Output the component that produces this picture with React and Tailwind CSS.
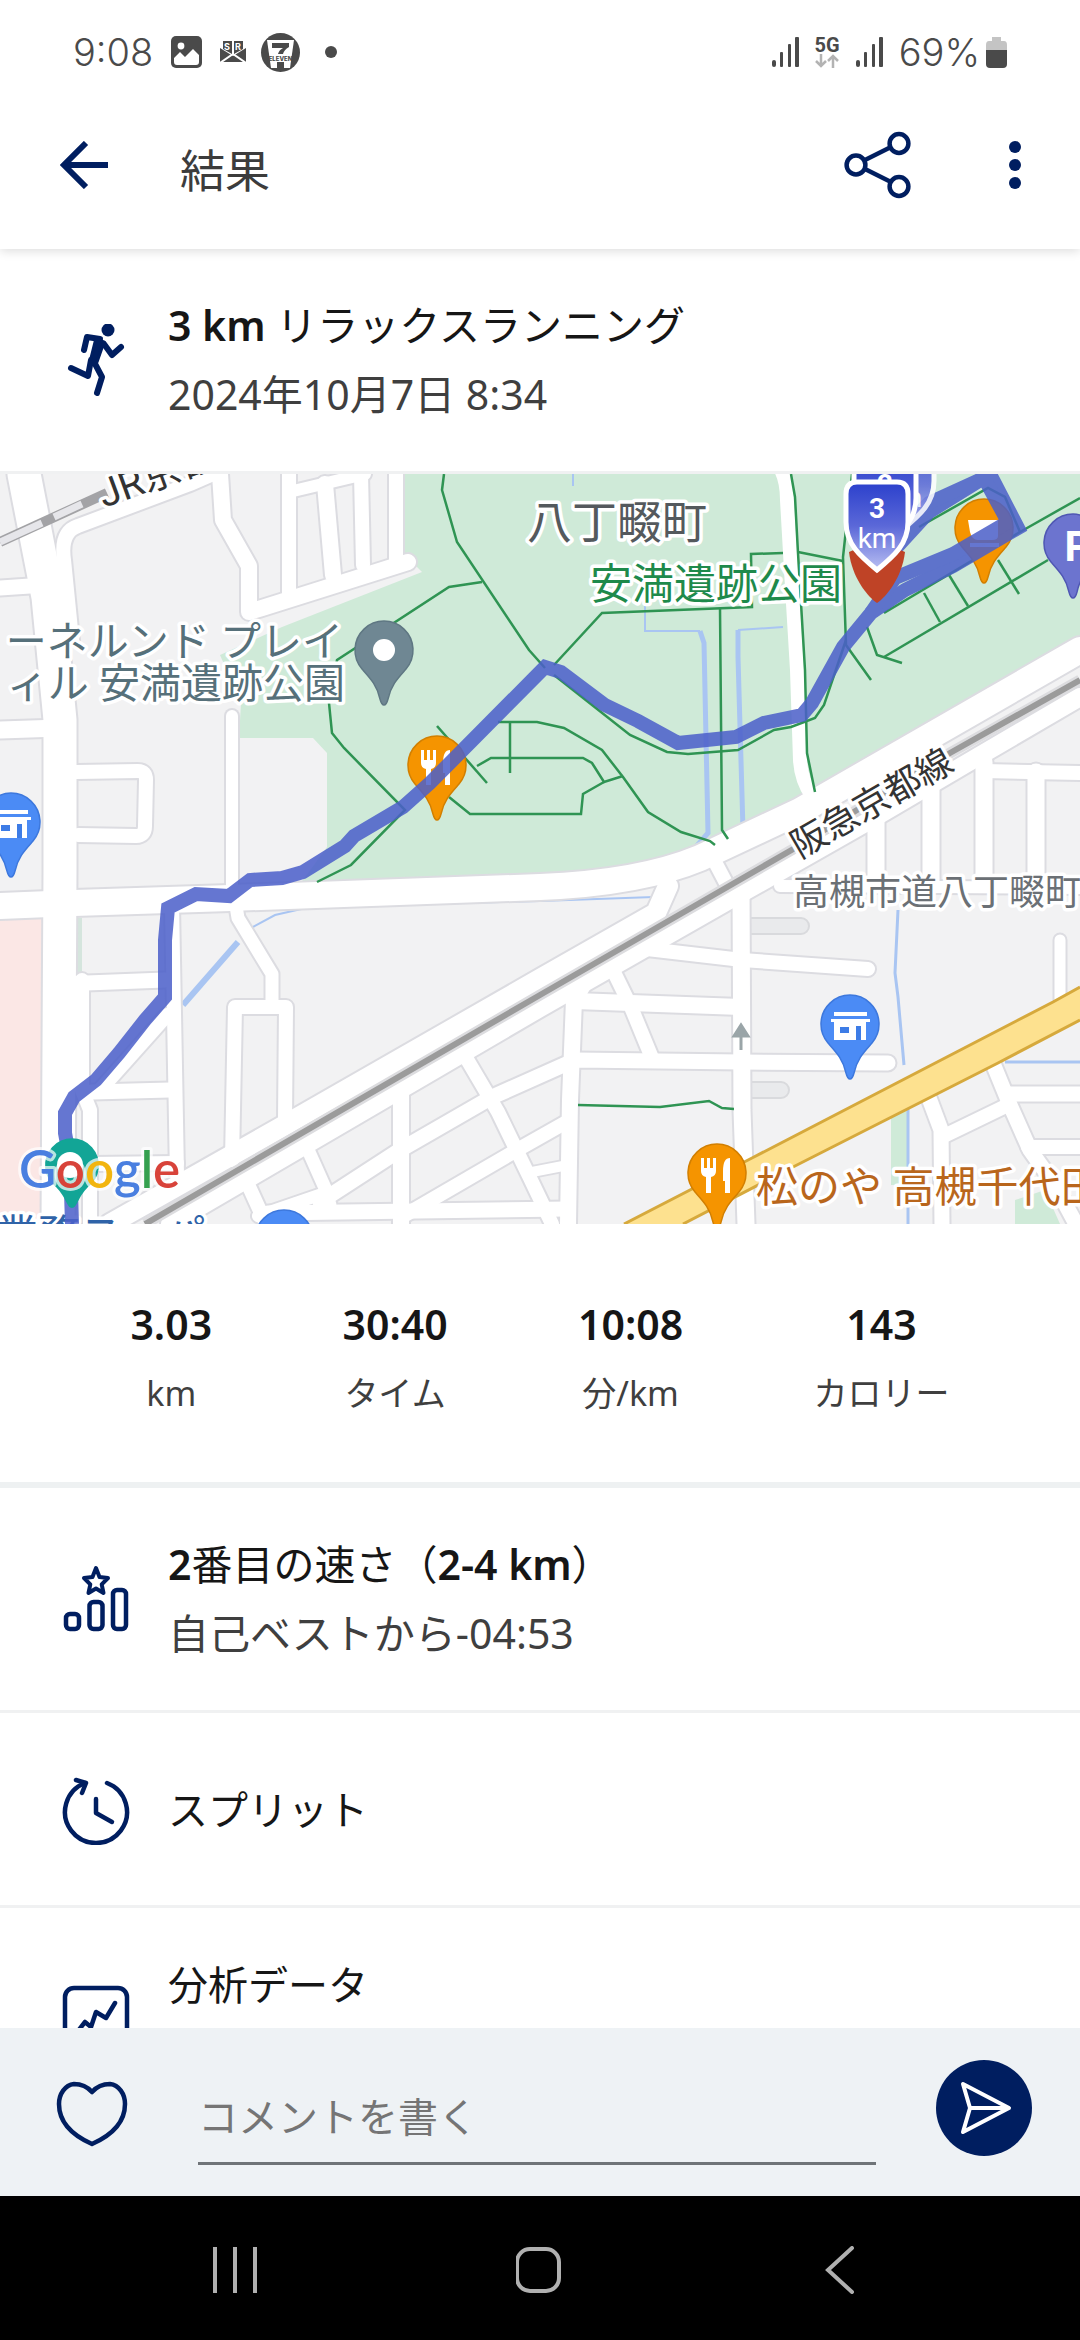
import React from "react";

const NAVY = "#001e60";

/* ---------- status bar ---------- */

function SignalBars() {
  return (
    <svg className="h-[30px] w-[27px]" viewBox="0 0 27 30" fill="#4a4a4a" aria-hidden="true">
      <rect x="0" y="23" width="4" height="7" rx="2" />
      <rect x="8" y="15" width="3" height="15" rx="1" />
      <rect x="16" y="7" width="3" height="23" rx="1" />
      <rect x="23" y="0" width="4" height="30" rx="1" />
    </svg>
  );
}

function StatusBar() {
  return (
    <div className="relative z-20 flex h-20 shrink-0 items-center justify-between bg-white pl-[73px] pr-[73px] pt-6 font-['Inter',sans-serif] text-[38px] leading-none text-[#4a4a4a]">
      <div className="flex items-center">
        <span className="font-light">9:08</span>
        <svg className="ml-[18px] h-8 w-[31px]" viewBox="0 0 31 32" aria-hidden="true">
          <rect width="31" height="32" rx="5" fill="#4a4a4a" />
          <circle cx="10" cy="10" r="3.4" fill="#fff" />
          <path d="M3 22 L9 16 L14 21 L22 13 L28 19 V26 Q28 29 25 29 H6 Q3 29 3 26Z" fill="#fff" />
        </svg>
        <svg className="ml-[18px] h-[23px] w-[26px]" viewBox="0 0 26 23" aria-hidden="true">
          <path d="M0 7 L13 15 L26 7 V21 H0Z" fill="#4a4a4a" />
          <path d="M0 22 L13 13 L26 22" stroke="#fff" strokeWidth="2" fill="none" />
          <path d="M3 0 H12 V13 L3 8Z M14 0 H23 V8 L14 13Z" fill="#4a4a4a" />
          <text x="4" y="9" fontSize="9" fontWeight="700" fill="#fff">S</text>
          <text x="15" y="9" fontSize="9" fontWeight="700" fill="#fff">R</text>
        </svg>
        <svg className="ml-[15px] h-[39px] w-[39px]" viewBox="0 0 39 39" aria-hidden="true">
          <circle cx="19.500" cy="19.500" r="19.500" fill="#4a4a4a" />
          <path d="M6 7 H33 L29 35 H10Z" fill="#fff" />
          <path d="M11 10 H28 V14 Q23 17 22 21 H17 Q18 17 22 15 H11Z" fill="#4a4a4a" />
          <rect x="16" y="29" width="7" height="6" fill="#4a4a4a" />
          <text x="19.500" y="27.500" fontSize="6" fontWeight="800" textAnchor="middle" fill="#4a4a4a">ELEVEN</text>
        </svg>
        <span className="ml-[25px] size-3 rounded-full bg-[#4a4a4a]" />
      </div>
      <div className="flex items-center">
        <SignalBars />
        <div className="ml-4 mr-4 flex flex-col items-center font-['Roboto',sans-serif]">
          <span className="text-[20px] font-bold leading-[18px]">5G</span>
          <svg className="h-[14px] w-6" viewBox="0 0 24 14" fill="none" stroke="#b3b3b3" strokeWidth="2.500" aria-hidden="true">
            <path d="M6 0 V12 M1 7 L6 12 L11 7 M18 14 V2 M13 7 L18 2 L23 7" />
          </svg>
        </div>
        <SignalBars />
        <span className="ml-4 font-light">69%</span>
        <svg className="ml-[6px] h-[31px] w-[21px]" viewBox="0 0 21 31" aria-hidden="true">
          <path d="M6 0 H15 V4 H18 Q21 4 21 8 V13 H0 V8 Q0 4 3 4 H6Z" fill="#c4c4c4" />
          <path d="M0 13 H21 V27 Q21 31 17 31 H4 Q0 31 0 27Z" fill="#4a4a4a" />
        </svg>
      </div>
    </div>
  );
}

/* ---------- toolbar ---------- */

function Toolbar() {
  return (
    <header className="z-10 flex h-[169px] shrink-0 items-center pl-[60px] pr-[47px] shadow-[0_2px_10px_rgba(0,0,0,0.14)]">
      <button type="button" aria-label="戻る">
        <svg className="size-12" viewBox="0 0 48 48" fill="none" stroke={NAVY} strokeWidth="6" aria-hidden="true">
          <path d="M26 2 L4 24 L26 46 M4 24 H48" />
        </svg>
      </button>
      <h1 className="ml-[72px] flex-1 pt-3 text-[45px] font-normal leading-none text-[#3c3c3c]">結果</h1>
      <button type="button" aria-label="共有" className="mr-[82px]">
        <svg className="size-[72px]" viewBox="0 0 72 72" fill="none" stroke={NAVY} strokeWidth="4.500" aria-hidden="true">
          <path d="M22 31 L48 18 M22 40 L48 53" />
          <circle cx="13" cy="36" r="9.4" />
          <circle cx="56" cy="14.500" r="9.4" />
          <circle cx="56" cy="57.500" r="9.4" />
        </svg>
      </button>
      <button type="button" aria-label="その他">
        <svg className="h-12 w-9" viewBox="0 0 36 48" fill={NAVY} aria-hidden="true">
          <circle cx="18" cy="6" r="6" />
          <circle cx="18" cy="24" r="6" />
          <circle cx="18" cy="42" r="6" />
        </svg>
      </button>
    </header>
  );
}

/* ---------- map ---------- */

const ROADS = [
  ["M24 474 L48 597 L60 720 L60 870 L58 1224", 33],
  ["M0 588 L30 586", 15],
  ["M0 730 L60 728", 17],
  ["M72 640 L64 560 Q60 532 78 526 L190 484 L222 470", 14],
  ["M220 474 L223 520 L249 566 L249 612 L262 608 L408 562", 16],
  ["M289 474 V597", 14],
  ["M325 484 L333 575", 16],
  ["M361 474 L363 565", 14],
  ["M396 474 V560", 14],
  ["M289 492 L365 474", 12],
  ["M232 716 V895", 12],
  ["M76 772 L138 771 Q146 771 146 780 L145 826 Q145 836 136 836 L78 835", 14],
  ["M0 906 L74 903 L230 898 L540 887 Q640 883 700 858 L800 811 L1080 650", 26],
  ["M60 984 L165 980", 15],
  ["M82 980 V1090 L90 1110 V1224", 14],
  ["M172 905 L177 1175", 14],
  ["M167 1015 L100 1090", 14],
  ["M92 1092 L170 1090", 15],
  ["M92 1164 L177 1163", 14],
  ["M235 900 L238 918 L272 974 V1005", 13],
  ["M232 1160 L235 1007 H286 L285 1120", 14],
  ["M110 1224 L285 1125 L540 979 L656 913 L668 886", 20],
  ["M170 1224 L540 1008 L733 898 L867 822 L974 759 L1080 697", 18],
  ["M715 862 L735 900", 14],
  ["M460 1046 L468 1061 L498 1112 L530 1178 L552 1224", 14],
  ["M401 1085 V1224", 16],
  ["M320 1202 L400 1150 L492 1097 L575 1060 L742 1062 L888 1063", 15],
  ["M400 1218 L517 1150 L570 1120", 14],
  ["M305 1143 L325 1188 L330 1205", 13],
  ["M246 1180 L266 1224", 14],
  ["M258 1216 L328 1192", 12],
  ["M268 1213 L568 1209", 15],
  ["M532 1172 L568 1165", 10],
  ["M590 974 L574 1000 L570 1100 L568 1224", 16],
  ["M741 885 L742 1110 L746 1224", 17],
  ["M630 947 L742 960 L868 969", 14],
  ["M575 1001 L741 1007", 16],
  ["M608 960 L631 1007 L652 1058", 14],
  ["M1060 940 V1010", 11],
  ["M876 818 V884", 17],
  ["M931 790 V884", 17],
  ["M984 762 V884", 17],
  ["M1036 772 V884", 17],
  ["M984 771 L1080 773", 14],
  ["M780 886 L1080 888", 12],
  ["M926 1090 L941 1130 L942 1224", 15],
  ["M946 1135 L1008 1105", 14],
  ["M990 1056 L1010 1105 L1030 1150 L1055 1185 L1076 1224", 15],
  ["M1008 1094 H1080", 15],
  ["M1028 1147 H1080", 14],
];

const TRAILS = [
  "M444 474 L442 490 L457 542 L529 650 L545 668",
  "M482 582 L449 587 L337 660 L329 703 L332 733 L344 748 L405 810 L351 865 L317 882",
  "M437 726 L487 783",
  "M498 722 H537 L564 728 L602 750 L623 777 L648 812 L681 832 L710 841 L715 845",
  "M510 722 V773",
  "M477 766 L491 758 H583 L592 763 L604 782 L623 776",
  "M604 782 L583 794 L581 814 H470 L449 797",
  "M554 665 L602 613 L752 607 L751 554 L783 553",
  "M798 552 L843 561",
  "M720 608 L722 830 L728 839",
  "M791 474 L795 497 L798 553 L805 670 L807 753 L815 792",
  "M554 675 L630 735 L667 752 L688 754 L738 750 L774 730 L791 727 L815 718 L824 705 L846 640",
  "M852 474 L843 557 L846 645 L871 680",
  "M867 627 L877 655 L902 663",
  "M884 657 L1048 560",
  "M924 593 L940 622",
  "M949 575 L968 606",
  "M998 560 L1019 594",
  "M1080 498 L1020 532 L884 613",
  "M919 527 L988 488 L1005 497 L1020 532",
  "M578 1105 L660 1107 L709 1101 L722 1108 L734 1109",
];

const PIN = "M0 55 C-2 55 -3 53 -4 49 C-7 35 -14 28 -22 19 A29 29 0 1 1 22 19 C14 28 7 35 4 49 C3 53 2 55 0 55Z";

function Pin({ x, y, fill, edge, children }) {
  return (
    <g transform={`translate(${x} ${y})`}>
      <path d={PIN} fill={fill} stroke={edge} strokeWidth="1.500" />
      {children}
    </g>
  );
}

function Cutlery() {
  return (
    <g fill="#fff">
      <path d="M-16 -15 h3 v10 h3 v-10 h3 v10 h3 v-10 h3 v13 q0 5 -5 6 v16 h-5 v-16 q-5 -1 -5 -6Z" />
      <path d="M6 -2 q0 -13 7 -13 v35 h-5 v-12 h-2Z" />
    </g>
  );
}

function Store() {
  return (
    <g>
      <path d="M-16 -12 H17 V-8 H-16Z M-19 -5 H20 V-2 H16 V16 H-16 V-2 H-19Z" fill="#fff" />
      <path d="M-10 3 H-1 V9 H-10Z M6 2 H11 V16 H6Z" fill="#3d7ce6" />
    </g>
  );
}

function Shield({ x, y, label, unit }) {
  return (
    <g transform={`translate(${x} ${y})`}>
      <path
        d="M-31 12 Q-31 0 -20 0 H20 Q31 0 31 12 V40 C31 62 17 74 0 88 C-17 74 -31 62 -31 40Z"
        fill="url(#shield)"
        stroke="#fff"
        strokeWidth="5"
      />
      {label && <text x="0" y="36" textAnchor="middle" fontSize="28" fontWeight="700" fill="#fff">{label}</text>}
      {unit && <text x="0" y="66" textAnchor="middle" fontSize="28" fill="#fff">{unit}</text>}
    </g>
  );
}

function RouteMap() {
  const halo = { paintOrder: "stroke", stroke: "#fff", strokeWidth: 7, strokeLinejoin: "round" };
  return (
    <svg
      className="block h-[750px] w-full shrink-0 font-['Roboto','Noto_Sans_CJK_JP',sans-serif]"
      viewBox="0 474 1080 750"
      preserveAspectRatio="xMidYMid slice"
      role="img"
      aria-label="ランニングルートの地図"
    >
      <defs>
        <linearGradient id="shield" x1="0" y1="0" x2="0" y2="1">
          <stop offset="0" stopColor="#2b40cc" />
          <stop offset="0.5" stopColor="#5b68d8" />
          <stop offset="1" stopColor="#b9bff2" />
        </linearGradient>
      </defs>
      <rect y="474" width="1080" height="750" fill="#f2f2f3" />
      <path d="M0 919 L42 917 V1224 H0Z" fill="#fbe7e5" />
      <path
        d="M403 474 H1080 V640 L798 800 L715 845 L667 857 L609 870 L540 876 L300 884 L327 847 V753 L313 738 H239 L241 703 L220 655 L282 627 L422 572 L403 553Z"
        fill="#cfead8"
      />
      <path d="M891 1112 L908 1104 V1185 H891Z M1015 1200 L1045 1190 L1060 1224 H1015Z" fill="#cfead8" />
      <path d="M74 918 H82 V975 H74Z" fill="#d5e5dd" />

      <g fill="none" stroke="#a9c5f2">
        <path d="M573 474 V486 M645 603 V631 H700 M783 627 L738 630" strokeWidth="2" />
        <path d="M700 631 L704 643 L708 833 L695 848 M738 630 V657 L743 830" strokeWidth="5" />
        <path d="M251 928 L275 915 L310 907 L540 901 L654 897" strokeWidth="2" />
        <path d="M183 1005 L238 942" strokeWidth="6" />
        <path d="M898 910 L895 973 L898 997 L904 1065 M908 1106 V1224 M1005 1062 H1080" strokeWidth="3" />
      </g>

      <g fill="none" strokeLinecap="round" strokeLinejoin="round">
        <path d="M750 926 H801 M750 1090 H781" stroke="#d9dadd" strokeWidth="18" />
        <path d="M750 926 H801 M750 1090 H781" stroke="#e9eaec" strokeWidth="14" />
        {ROADS.map(([d, w]) => (
          <path key={d} d={d} stroke="#dcdce1" strokeWidth={w + 4} />
        ))}
        {ROADS.map(([d, w]) => (
          <path key={d} d={d} stroke="#fff" strokeWidth={w} />
        ))}
        <path d="M780 468 Q787 480 787 500 L791 570 L797 670 L800 760 Q801 780 812 796" stroke="#fff" strokeWidth="14" />
      </g>

      <path d="M145 1224 L540 995 L795 848 L950 753 L1080 680" fill="none" stroke="#dcdcdf" strokeWidth="11" />
      <path d="M145 1224 L540 995 L795 848 L950 753 L1080 680" fill="none" stroke="#9b9b9b" strokeWidth="6" />
      <path d="M0 542 L107 493" fill="none" stroke="#a3a3a6" strokeWidth="10" />
      <path d="M0 542 L42 523 M54 517 L82 504" fill="none" stroke="#e6e6ea" strokeWidth="7" />

      <path d="M624 1224 L752 1158 L1053 1002 L1080 987 V1020 L998 1063 L793 1167 L683 1224Z" fill="#fde18f" />
      <path
        d="M624 1224 L752 1158 L1053 1002 L1080 987 M1080 1020 L998 1063 L793 1167 L683 1224"
        fill="none"
        stroke="#d6a93c"
        strokeWidth="3"
      />

      <g fill="none" stroke="#2f9453" strokeWidth="2.500">
        {TRAILS.map((d) => (
          <path key={d} d={d} />
        ))}
      </g>
      <path d="M741 1050 V1032 M734 1036 L741 1025 L748 1036Z" fill="#9aa5a8" stroke="#9aa5a8" strokeWidth="3" />

      <g style={halo}>
        <text x="104" y="508" fontSize="39" fill="#333" transform="rotate(-20 104 508)">JR京都線</text>
        <text x="527" y="539" fontSize="45" fill="#54595d">八丁畷町</text>
        <text x="343" y="656" fontSize="41" fill="#56707a" textAnchor="end">ーネルンド プレイ</text>
        <text x="345" y="698" fontSize="41" fill="#56707a" textAnchor="end">ィル 安満遺跡公園</text>
        <text x="800" y="859" fontSize="36" fill="#333" transform="rotate(-30 800 859)">阪急京都線</text>
        <text x="793" y="905" fontSize="36" fill="#6b7075">高槻市道八丁畷町</text>
        <text x="756" y="1202" fontSize="42" fill="#b9661c">松のや 高槻千代田</text>
        <text x="-4" y="1250" fontSize="42" fill="#2f63a8">業務スーパー</text>
        <text x="590" y="599" fontSize="42" fill="#1e8a4b">安満遺跡公園</text>
      </g>

      <Pin x={384} y={650} fill="#6f8793" edge="#5f7783">
        <circle r="11" fill="#fff" />
      </Pin>
      <Pin x={437} y={765} fill="#f59400" edge="#d27f00"><Cutlery /></Pin>
      <Pin x={984} y={528} fill="#f59400" edge="#d27f00">
        <path d="M-16 -8 H14 V8 Q14 12 8 12 H-6 Q-12 12 -14 4Z M-14 15 H15 V19 H-14Z" fill="#fff" />
      </Pin>
      <Pin x={1073} y={543} fill="#6c74cf" edge="#4f57b3">
        <text x="5" y="18" textAnchor="middle" fontSize="42" fontWeight="700" fill="#fff">P</text>
      </Pin>
      <Pin x={11} y={822} fill="#4b8bf5" edge="#3d78dd"><Store /></Pin>
      <Pin x={850} y={1024} fill="#4b8bf5" edge="#3d78dd"><Store /></Pin>
      <Pin x={717} y={1173} fill="#f59400" edge="#d27f00"><Cutlery /></Pin>
      <Pin x={284} y={1239} fill="#4b8bf5" edge="#3d78dd" />

      <g fill="none" stroke="#4c60c9" strokeWidth="14" opacity="0.86">
        <path d="M72 1224 L70 1160 L65 1133 V1113 L74 1097 L96 1080 L119 1053 L145 1020 L165 997 V977 V940 L168 908 L196 894 L229 896 L250 880 L282 878 L303 872 L345 846 L354 836 L403 807 L430 783 L545 667 L561 672 L605 705 L638 721 L678 743 L736 737 L764 723 L802 715 L812 703 L843 647 L871 613 L905 590 L953 566 L1018 528 L990 474 L929 512 L896 548" />
        <path d="M871 613 L895 578 L953 554 L1008 522 L984 478 L929 503 L898 535" />
      </g>

      <path d="M877 603 C868 597 852 578 849 552 L877 540 L905 552 C902 578 886 597 877 603Z" fill="#bf4326" />
      <g opacity="0.85"><Shield x={903} y={441} unit="km" /></g>
      <Shield x={885} y={458} label="2" />
      <Shield x={877} y={482} label="3" unit="km" />

      <path d="M72 1208 C67 1208 66 1197 56 1187 A27 27 0 1 1 88 1187 C78 1197 77 1208 72 1208Z" fill="#12a596" />
      <circle cx="70" cy="1165" r="13" fill="#fff" />
      <text
        x="19"
        y="1188"
        fontSize="51"
        fontWeight="600"
        className="font-['Lato',sans-serif]"
        style={{ paintOrder: "stroke", stroke: "#fff", strokeOpacity: 0.7, strokeWidth: 6, strokeLinejoin: "round" }}
      >
        <tspan fill="#4a7fe0">G</tspan>
        <tspan fill="#d8433a">o</tspan>
        <tspan fill="#f2b50f">o</tspan>
        <tspan fill="#4a7fe0">g</tspan>
        <tspan fill="#35a04f">l</tspan>
        <tspan fill="#d8433a">e</tspan>
      </text>
    </svg>
  );
}

/* ---------- row icons ---------- */

function RowIcon({ children }) {
  return (
    <svg
      className="size-[72px] shrink-0"
      viewBox="0 0 72 72"
      fill="none"
      stroke={NAVY}
      strokeWidth="4.500"
      strokeLinecap="round"
      strokeLinejoin="round"
      aria-hidden="true"
    >
      {children}
    </svg>
  );
}

const RunnerIcon = () => (
  <RowIcon>
    <circle cx="48" cy="6" r="6.500" fill={NAVY} stroke="none" />
    <g strokeWidth="6">
      <path d="M40 15 L27 13 L24 26" />
      <path d="M44 20 L52 31 L61 23" />
      <path d="M33 36 L42 53 L37 69" />
      <path d="M31 36 L28 52 L11 44" />
    </g>
    <path d="M36 14 L44 18 L37 38 L30 38Z" fill={NAVY} strokeWidth="3" />
  </RowIcon>
);

const RankIcon = () => (
  <RowIcon>
    <path d="M36 5 L39.500 14 L48 15 L41.700 21.400 L43.500 30 L36 25.500 L28.500 30 L30.300 21.400 L24 15 L32.500 14Z" strokeWidth="4" />
    <rect x="6" y="51" width="13" height="15" rx="4" strokeWidth="4.500" />
    <rect x="29.500" y="39" width="13" height="27" rx="4" strokeWidth="4.500" />
    <rect x="53" y="27" width="13" height="39" rx="4" strokeWidth="4.500" />
  </RowIcon>
);

const SplitIcon = () => (
  <RowIcon>
    <path d="M25 10 A31 31 0 1 0 47 10" />
    <path d="M16 7 L26 10 L22 20" />
    <path d="M36 26 V40 L52 49" />
  </RowIcon>
);

const AnalysisIcon = () => (
  <RowIcon>
    <rect x="5" y="5" width="62" height="62" rx="9" />
    <path d="M18 48 L25 39 L31 44 L36 29 L46 35 L55 20" />
  </RowIcon>
);

/* ---------- content ---------- */

const B = ({ children }) => <span className="font-semibold">{children}</span>;

function TwoLine({ icon, title, sub }) {
  return (
    <div className="flex h-[222px] shrink-0 items-center gap-9 px-[60px]">
      {icon}
      <div className="text-[41px] leading-[69px]">
        <p className="text-[#161616]">{title}</p>
        <p className="min-h-[69px] text-[#3f3f3f]">{sub}</p>
      </div>
    </div>
  );
}

const STATS = [
  ["3.03", "km"],
  ["30:40", "タイム"],
  ["10:08", "分/km"],
  ["143", "カロリー"],
];

export default function App() {
  return (
    <div className="flex h-screen flex-col overflow-hidden bg-white font-['Noto_Sans','Noto_Sans_CJK_JP',sans-serif]">
      <StatusBar />
      <Toolbar />
      <main className="flex min-h-0 flex-1 flex-col overflow-hidden">
        <TwoLine
          icon={<RunnerIcon />}
          title={<><B>3 km</B> リラックスランニング</>}
          sub="2024年10月7日 8:34"
        />
        <div className="h-[3px] shrink-0 bg-[#f0f1f2]" />
        <RouteMap />
        <dl className="flex shrink-0 justify-evenly border-b-[6px] border-[#eef1f2] pb-[54px] pt-[66px] text-center">
          {STATS.map(([value, label]) => (
            <div key={label} className="flex flex-col-reverse">
              <dt className="text-[34px] leading-[69px] text-[#3f3f3f]">{label}</dt>
              <dd className="text-[41px] font-semibold leading-[69px] text-[#161616]">{value}</dd>
            </div>
          ))}
        </dl>
        <TwoLine
          icon={<RankIcon />}
          title={<><B>2</B>番目の速さ（<B>2-4 km</B>）</>}
          sub="自己ベストから-04:53"
        />
        <div className="flex h-[198px] shrink-0 items-center gap-9 border-y-[3px] border-[#f0f1f2] px-[60px]">
          <SplitIcon />
          <p className="text-[40px] leading-[69px] text-[#161616]">スプリット</p>
        </div>
        <TwoLine icon={<AnalysisIcon />} title={<span className="text-[40px]">分析データ</span>} />
      </main>

      <form
        className="flex h-[168px] shrink-0 items-center bg-[#eef2f5] pl-[54px] pr-12"
        onSubmit={(e) => e.preventDefault()}
      >
        <button type="button" aria-label="いいね" className="shrink-0">
          <svg className="h-[72px] w-[76px]" viewBox="0 0 76 72" fill="none" stroke={NAVY} strokeWidth="4.500" strokeLinejoin="round" aria-hidden="true">
            <path d="M38 16 C31 8 23 8 20 8 C11 9 5 18 5 28 C5 47 20 60 38 68 C56 60 71 47 71 28 C71 18 65 9 56 8 C53 8 45 8 38 16Z" />
          </svg>
        </button>
        <input
          type="text"
          aria-label="コメントを書く"
          placeholder="コメントを書く"
          className="ml-[68px] mr-[60px] mt-3 h-[94px] min-w-0 flex-1 border-b-[3px] border-[#6f7478] bg-transparent px-0 text-[40px] text-[#333] outline-none placeholder:text-[#757575]"
        />
        <button type="submit" aria-label="送信" className="mb-2 size-24 shrink-0 rounded-full bg-[#001e60]">
          <svg className="size-24" viewBox="0 0 96 96" fill="none" stroke="#fff" strokeWidth="4" strokeLinejoin="round" aria-hidden="true">
            <path d="M27 24 L73 48 L27 72 L34 48Z M34 48 H73" />
          </svg>
        </button>
      </form>

      <nav className="grid h-36 shrink-0 grid-cols-3 place-items-center bg-black px-[85px] pt-1">
        <button type="button" aria-label="最近使ったアプリ">
          <svg className="size-12" viewBox="0 0 48 48" stroke="#b0b0b0" strokeWidth="4" aria-hidden="true">
            <path d="M2 1 V47 M22 1 V47 M42 1 V47" />
          </svg>
        </button>
        <button type="button" aria-label="ホーム">
          <svg className="size-12" viewBox="0 0 48 48" fill="none" stroke="#b0b0b0" strokeWidth="4" aria-hidden="true">
            <rect x="1" y="3" width="42" height="42" rx="13" />
          </svg>
        </button>
        <button type="button" aria-label="戻る">
          <svg className="size-12" viewBox="0 0 48 48" fill="none" stroke="#b0b0b0" strokeWidth="4" strokeLinecap="round" aria-hidden="true">
            <path d="M33 2 L9 24 L33 46" />
          </svg>
        </button>
      </nav>
    </div>
  );
}
